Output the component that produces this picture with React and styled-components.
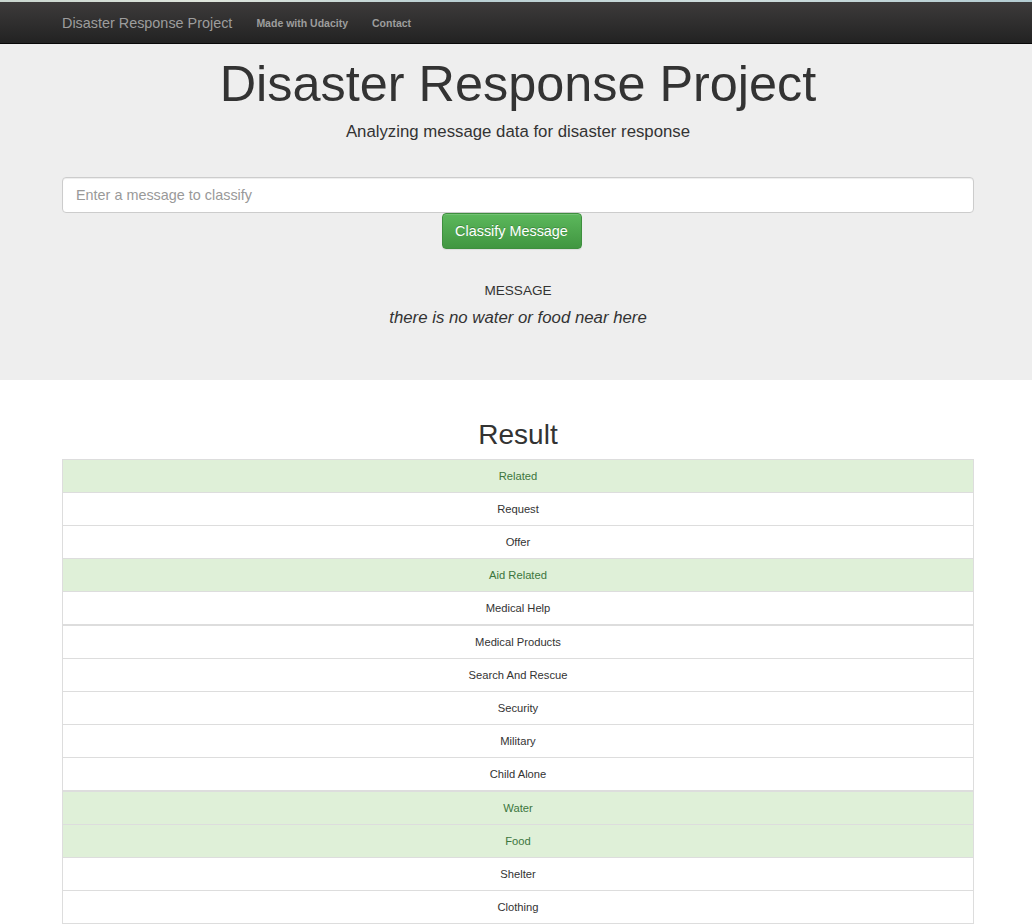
import React from "react";
import styled, { createGlobalStyle } from "styled-components";

const Global = createGlobalStyle`
  html, body { margin: 0; padding: 0; background: #fff; }
  body { font-family: "Liberation Sans", Arial, Helvetica, sans-serif; color: #333; }
  * { box-sizing: border-box; }
`;

const Strip = styled.div`
  height: 2px;
  background: linear-gradient(90deg, #c9d6cf 0%, #dfe6dd 20%, #b8cfd3 45%, #cfdedd 70%, #b3ccd2 100%);
`;

const Navbar = styled.nav`
  height: 42px;
  background: linear-gradient(to bottom, #3d3b3b 0%, #222 100%);
  border-bottom: 1px solid #080808;
`;

const NavInner = styled.div`
  margin-left: 62px;
  width: 912px;
  height: 100%;
  display: flex;
  align-items: center;
`;

const Brand = styled.a`
  font-size: 14.4px;
  color: #9d9d9d;
  text-decoration: none;
  margin-right: 24px;
`;

const NavLink = styled.a`
  font-size: 10.5px;
  font-weight: bold;
  color: #9d9d9d;
  text-decoration: none;
  margin-right: 24px;
`;

const Jumbotron = styled.header`
  background: #eee;
  height: 336px;
  padding-top: 12px;
`;

const Container = styled.div`
  width: 912px;
  margin-left: 62px;
  display: flex;
  flex-direction: column;
  align-items: stretch;
`;

const Title = styled.h1`
  margin: 0;
  font-size: 50.4px;
  line-height: 55px;
  font-weight: normal;
  text-align: center;
  color: #333;
`;

const Subtitle = styled.p`
  margin: 9px 0 0;
  font-size: 16.8px;
  line-height: 24px;
  text-align: center;
  color: #333;
`;

const Input = styled.input`
  margin-top: 33px;
  height: 36px;
  width: 100%;
  border: 1px solid #ccc;
  border-radius: 4px;
  background: #fff;
  padding: 0 13px;
  font-family: inherit;
  font-size: 14.4px;
  color: #555;
  box-shadow: inset 0 1px 1px rgba(0,0,0,0.075);
  &::placeholder { color: #999; }
`;

const ButtonRow = styled.div`
  display: flex;
  justify-content: center;
  padding-right: 13px;
`;

const Button = styled.button`
  height: 36px;
  width: 140px;
  border: 1px solid #3e8f3e;
  border-radius: 4px;
  background: linear-gradient(to bottom, #5cb85c 0%, #419641 100%);
  color: #fff;
  font-family: inherit;
  font-size: 14.4px;
  text-shadow: 0 -1px 0 rgba(0,0,0,0.2);
  box-shadow: inset 0 1px 0 rgba(255,255,255,0.15), 0 1px 1px rgba(0,0,0,0.075);
  padding: 0;
`;

const Label = styled.div`
  margin-top: 32px;
  font-size: 13.6px;
  line-height: 20px;
  text-align: center;
  text-transform: uppercase;
  color: #333;
`;

const Message = styled.div`
  margin-top: 5px;
  font-size: 16.8px;
  line-height: 24px;
  font-style: italic;
  text-align: center;
  color: #333;
`;

const Main = styled.main`
  width: 912px;
  margin-left: 62px;
  padding-top: 39px;
`;

const ResultTitle = styled.h2`
  margin: 0 0 9px;
  font-size: 28px;
  line-height: 31px;
  font-weight: normal;
  text-align: center;
  color: #333;
`;

const Table = styled.table`
  width: 100%;
  border-collapse: collapse;
  border: 1px solid #ddd;
`;

const Group = styled.tbody`
  & + & { border-top: 2px solid #ddd; }
  & + & tr:first-child td { height: 34px; }
`;

const Cell = styled.td`
  height: 33px;
  padding: 0;
  border-top: 1px solid #ddd;
  text-align: center;
  vertical-align: middle;
  font-size: 11.2px;
  color: ${(p) => (p.$on ? "#3c763d" : "#333")};
  background: ${(p) => (p.$on ? "#dff0d8" : "#fff")};
`;

const groups = [
  [["Related", 1], ["Request", 0], ["Offer", 0], ["Aid Related", 1], ["Medical Help", 0]],
  [["Medical Products", 0], ["Search And Rescue", 0], ["Security", 0], ["Military", 0], ["Child Alone", 0]],
  [["Water", 1], ["Food", 1], ["Shelter", 0], ["Clothing", 0]],
];

export default function App() {
  return (
    <>
      <Global />
      <Strip />
      <Navbar>
        <NavInner>
          <Brand href="#">Disaster Response Project</Brand>
          <NavLink href="#">Made with Udacity</NavLink>
          <NavLink href="#">Contact</NavLink>
        </NavInner>
      </Navbar>
      <Jumbotron>
        <Container>
          <Title>Disaster Response Project</Title>
          <Subtitle>Analyzing message data for disaster response</Subtitle>
          <Input placeholder="Enter a message to classify" />
          <ButtonRow>
            <Button>Classify Message</Button>
          </ButtonRow>
          <Label>Message</Label>
          <Message>there is no water or food near here</Message>
        </Container>
      </Jumbotron>
      <Main>
        <ResultTitle>Result</ResultTitle>
        <Table>
          {groups.map((g, i) => (
            <Group key={i}>
              {g.map(([name, on]) => (
                <tr key={name}>
                  <Cell $on={!!on}>{name}</Cell>
                </tr>
              ))}
            </Group>
          ))}
        </Table>
      </Main>
    </>
  );
}
